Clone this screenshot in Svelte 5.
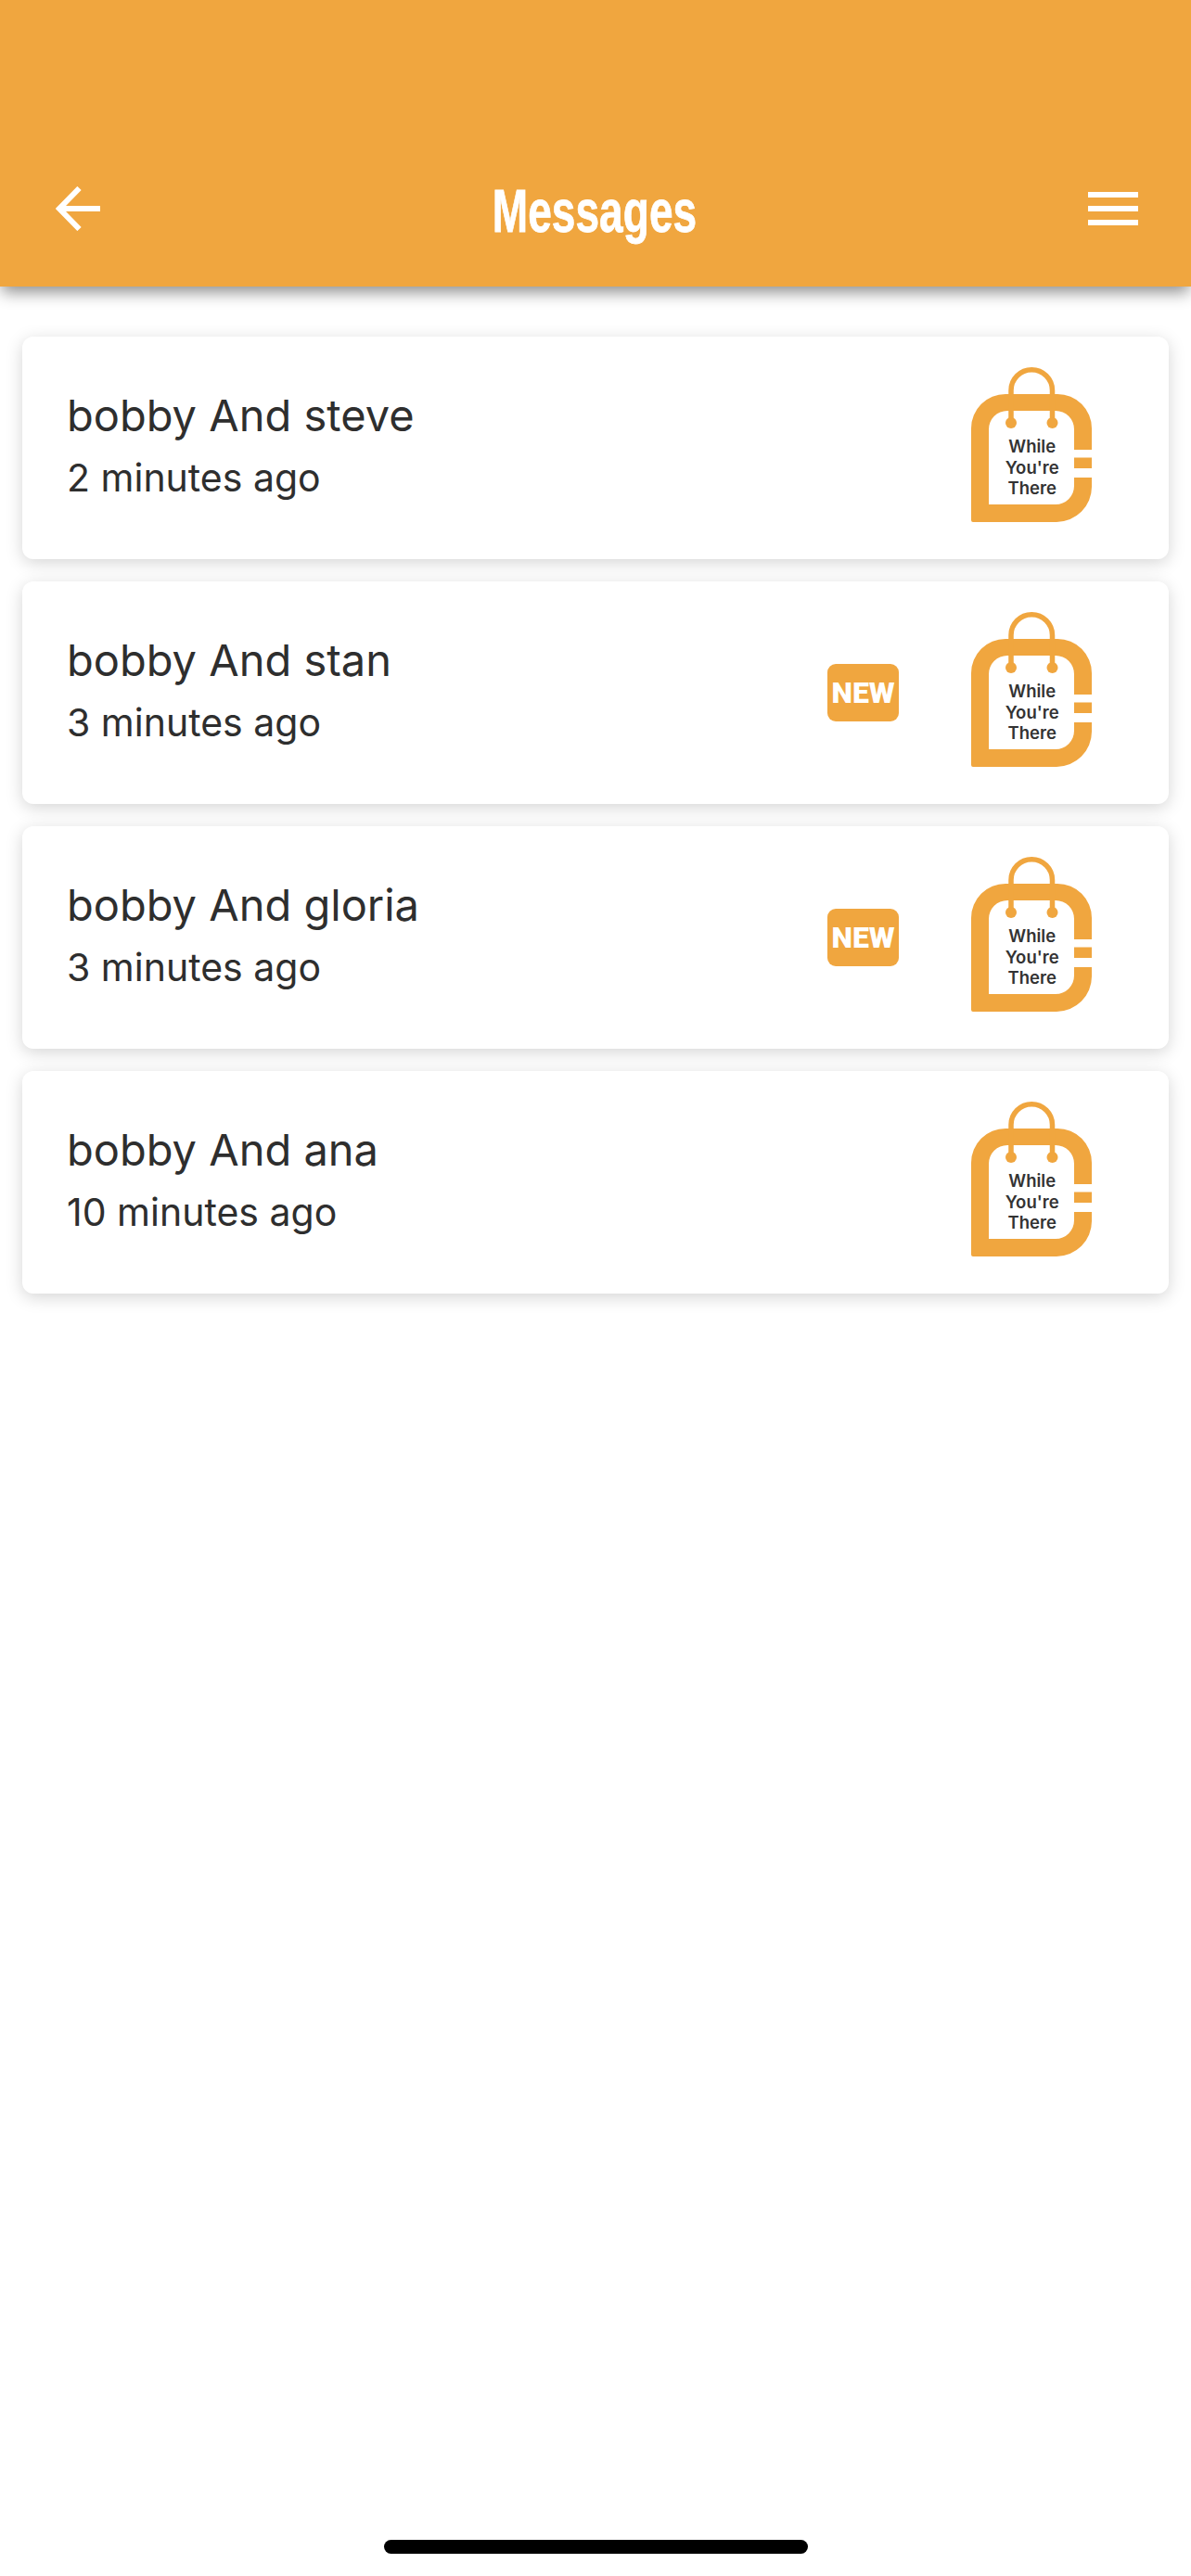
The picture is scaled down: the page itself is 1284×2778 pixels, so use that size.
<script lang="ts">
	const threads = [
		{ name: 'bobby And steve', time: '2 minutes ago', isNew: false },
		{ name: 'bobby And stan', time: '3 minutes ago', isNew: true },
		{ name: 'bobby And gloria', time: '3 minutes ago', isNew: true },
		{ name: 'bobby And ana', time: '10 minutes ago', isNew: false }
	];
</script>

<div class="page">
	<header class="topbar">
		<button class="icon-btn back" aria-label="Back">
			<svg width="48" height="48" viewBox="0 0 48 48" fill="none" stroke="#fff" stroke-width="6">
				<path d="M48 24H4" />
				<path d="M25.5 2 4 24l21.5 22" />
			</svg>
		</button>
		<h1>Messages</h1>
		<button class="icon-btn menu" aria-label="Menu">
			<span></span>
			<span></span>
			<span></span>
		</button>
	</header>

	<main class="list">
		{#each threads as thread}
			<div class="card">
				<div class="info">
					<div class="name">{thread.name}</div>
					<div class="time">{thread.time}</div>
				</div>
				{#if thread.isNew}
					<div class="badge">NEW</div>
				{/if}
				<svg class="logo" width="130" height="167" viewBox="27 16 130 167">
					<path
						fill="#f0a63f"
						d="M29 183A2 2 0 0 1 27 181V82A37 37 0 0 1 64 45H120A37 37 0 0 1 157 82V105H138V83A20 20 0 0 0 118 63H66A20 20 0 0 0 46 83V164H118A20 20 0 0 0 138 144V135H157V145A38 38 0 0 1 119 183Z"
					/>
					<rect x="138" y="113.5" width="19" height="11.5" fill="#f0a63f" />
					<path d="M70 76V41A22.2 22.2 0 0 1 114.5 41V76" fill="none" stroke="#f0a63f" stroke-width="5.5" />
					<circle cx="70" cy="76" r="6" fill="#f0a63f" />
					<circle cx="114.5" cy="76" r="6" fill="#f0a63f" />
					<g class="logo-text">
						<text x="92.7" y="108">While</text>
						<text x="92.7" y="131">You're</text>
						<text x="92.7" y="153">There</text>
					</g>
				</svg>
			</div>
		{/each}
	</main>

	<div class="home-indicator"></div>
</div>

<style>
	:global(body) {
		margin: 0;
		background: #fff;
	}

	.page {
		min-height: 2778px;
		display: flex;
		flex-direction: column;
		font-family: Inter, 'Liberation Sans', sans-serif;
	}

	.topbar {
		height: 309px;
		box-sizing: border-box;
		padding: 0 57px 0 60px;
		background: #f0a63f;
		box-shadow: 0 8px 16px -2px rgba(0, 0, 0, 0.45);
		display: flex;
		align-items: flex-end;
		justify-content: space-between;
	}

	.topbar h1 {
		margin: 0 0 45px;
		font-family: 'Liberation Sans', sans-serif;
		font-size: 64px;
		font-weight: 700;
		line-height: 72px;
		color: #fff;
		-webkit-text-stroke: 0.8px #fff;
		/* no condensed family installed, squeeze the bold one */
		transform: scaleX(0.72);
	}

	.icon-btn {
		padding: 0;
		border: none;
		background: none;
	}

	.back {
		height: 48px;
		margin-bottom: 60px;
	}

	.menu {
		width: 54px;
		display: flex;
		flex-direction: column;
		gap: 9px;
		margin-bottom: 66px;
	}

	.menu span {
		height: 6px;
		background: #fff;
	}

	.list {
		padding: 54px 24px 0;
		display: flex;
		flex-direction: column;
		gap: 24px;
	}

	.card {
		height: 240px;
		box-sizing: border-box;
		padding: 0 83px 0 48px;
		background: #fff;
		border-radius: 12px;
		box-shadow: 0 4px 18px rgba(0, 0, 0, 0.17);
		display: flex;
		align-items: center;
		color: #2e2e2e;
	}

	.info {
		flex: 1;
		margin-top: -4px;
	}

	.name {
		margin-bottom: 2px;
		font-size: 47px;
		line-height: 66px;
	}

	.time {
		font-size: 41px;
		line-height: 64px;
	}

	.badge {
		width: 77px;
		height: 62px;
		margin-right: 78px;
		border-radius: 9px;
		background: #f0a63f;
		color: #fff;
		font-family: Roboto, sans-serif;
		font-size: 32px;
		font-weight: 900;
		line-height: 62px;
		text-align: center;
	}

	.logo {
		align-self: flex-start;
		margin-top: 33px;
	}

	.logo-text text {
		font-family: Inter, sans-serif;
		font-size: 18.5px;
		font-weight: 600;
		text-anchor: middle;
		fill: #333;
	}

	.home-indicator {
		width: 457px;
		height: 15px;
		margin: auto auto 24px;
		border-radius: 8px;
		background: #000;
	}
</style>
